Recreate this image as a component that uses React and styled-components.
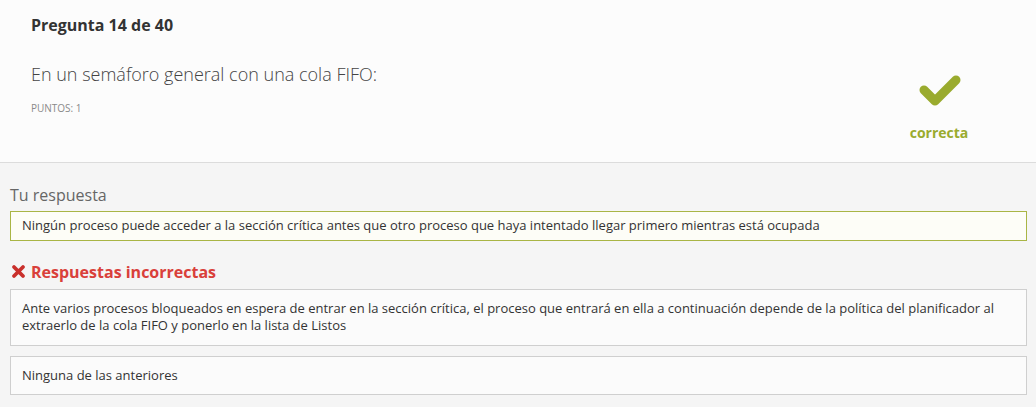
import React from "react";
import styled, { createGlobalStyle } from "styled-components";

const GlobalStyle = createGlobalStyle`
  html, body {
    margin: 0;
    padding: 0;
    background: #f5f5f5;
    font-family: "Open Sans", "Noto Sans", sans-serif;
  }
`;

const Page = styled.div`
  width: 1036px;
  height: 407px;
  overflow: hidden;
  background: #f5f5f5;
`;

const Header = styled.header`
  display: flex;
  justify-content: space-between;
  height: 163px;
  box-sizing: border-box;
  padding: 0 37px 0 31px;
  background: #fcfcfc;
  border-bottom: 1px solid #dcdcdc;
`;

const Info = styled.div`
  display: flex;
  flex-direction: column;
  padding-top: 14px;
`;

const Title = styled.h2`
  margin: 0;
  font-size: 16px;
  line-height: 22px;
  font-weight: 700;
  color: #333;
`;

const Question = styled.p`
  margin: 25px 0 0;
  font-size: 18px;
  line-height: 26px;
  font-weight: 300;
  color: #444;
`;

const Points = styled.span`
  margin-top: 14px;
  font-size: 10px;
  line-height: 14px;
  color: #8a8a8a;
`;

const Verdict = styled.div`
  width: 120px;
  display: flex;
  flex-direction: column;
  align-items: center;
  padding-top: 74px;
`;

const VerdictText = styled.span`
  margin-top: 15px;
  font-size: 14px;
  line-height: 20px;
  font-weight: 700;
  color: ${(p) => p.color};
`;

const Body = styled.section`
  padding: 21px 9px 0 10px;
`;

const Label = styled.div`
  font-size: 16px;
  line-height: 22px;
  color: #666;
  margin-bottom: 5px;
`;

const AnswerBox = styled.div`
  box-sizing: border-box;
  padding: ${(p) => (p.compact ? "5px 11px" : "10px 11px")};
  margin-bottom: ${(p) => p.gap || 0}px;
  font-size: 13px;
  line-height: 17.5px;
  color: #333;
  background: ${(p) => (p.correct ? "#fdfdf7" : "#fbfbfb")};
  border: 1px solid ${(p) => (p.correct ? "#a9b545" : "#cfcfcf")};
`;

const WrongHeading = styled.h3`
  display: flex;
  align-items: center;
  gap: 5px;
  margin: 20px 0 6px 1px;
  font-size: 16px;
  line-height: 22px;
  font-weight: 700;
  color: #d9403a;
`;

const CheckIcon = ({ color }) => (
  <svg width="47" height="34" viewBox="0 0 47 34">
    <polyline
      points="8,16 19,27 40,6"
      fill="none"
      stroke={color}
      strokeWidth="9"
      strokeLinecap="round"
      strokeLinejoin="round"
    />
  </svg>
);

const CrossIcon = () => (
  <svg width="15" height="15" viewBox="0 0 15 15">
    <path
      d="M3 3 L12 12 M12 3 L3 12"
      stroke="#c9302c"
      strokeWidth="3.8"
      strokeLinecap="round"
    />
  </svg>
);

const green = "#9aab2e";

export default function App() {
  return (
    <Page>
      <GlobalStyle />
      <Header>
        <Info>
          <Title>Pregunta 14 de 40</Title>
          <Question>En un semáforo general con una cola FIFO:</Question>
          <Points>PUNTOS: 1</Points>
        </Info>
        <Verdict>
          <CheckIcon color={green} />
          <VerdictText color={green}>correcta</VerdictText>
        </Verdict>
      </Header>
      <Body>
        <Label>Tu respuesta</Label>
        <AnswerBox correct compact>
          Ningún proceso puede acceder a la sección crítica antes que otro proceso que haya
          intentado llegar primero mientras está ocupada
        </AnswerBox>
        <WrongHeading>
          <CrossIcon />
          Respuestas incorrectas
        </WrongHeading>
        <AnswerBox gap={10}>
          Ante varios procesos bloqueados en espera de entrar en la sección crítica, el proceso
          que entrará en ella a continuación depende de la política del planificador al
          extraerlo de la cola FIFO y ponerlo en la lista de Listos
        </AnswerBox>
        <AnswerBox>Ninguna de las anteriores</AnswerBox>
      </Body>
    </Page>
  );
}
